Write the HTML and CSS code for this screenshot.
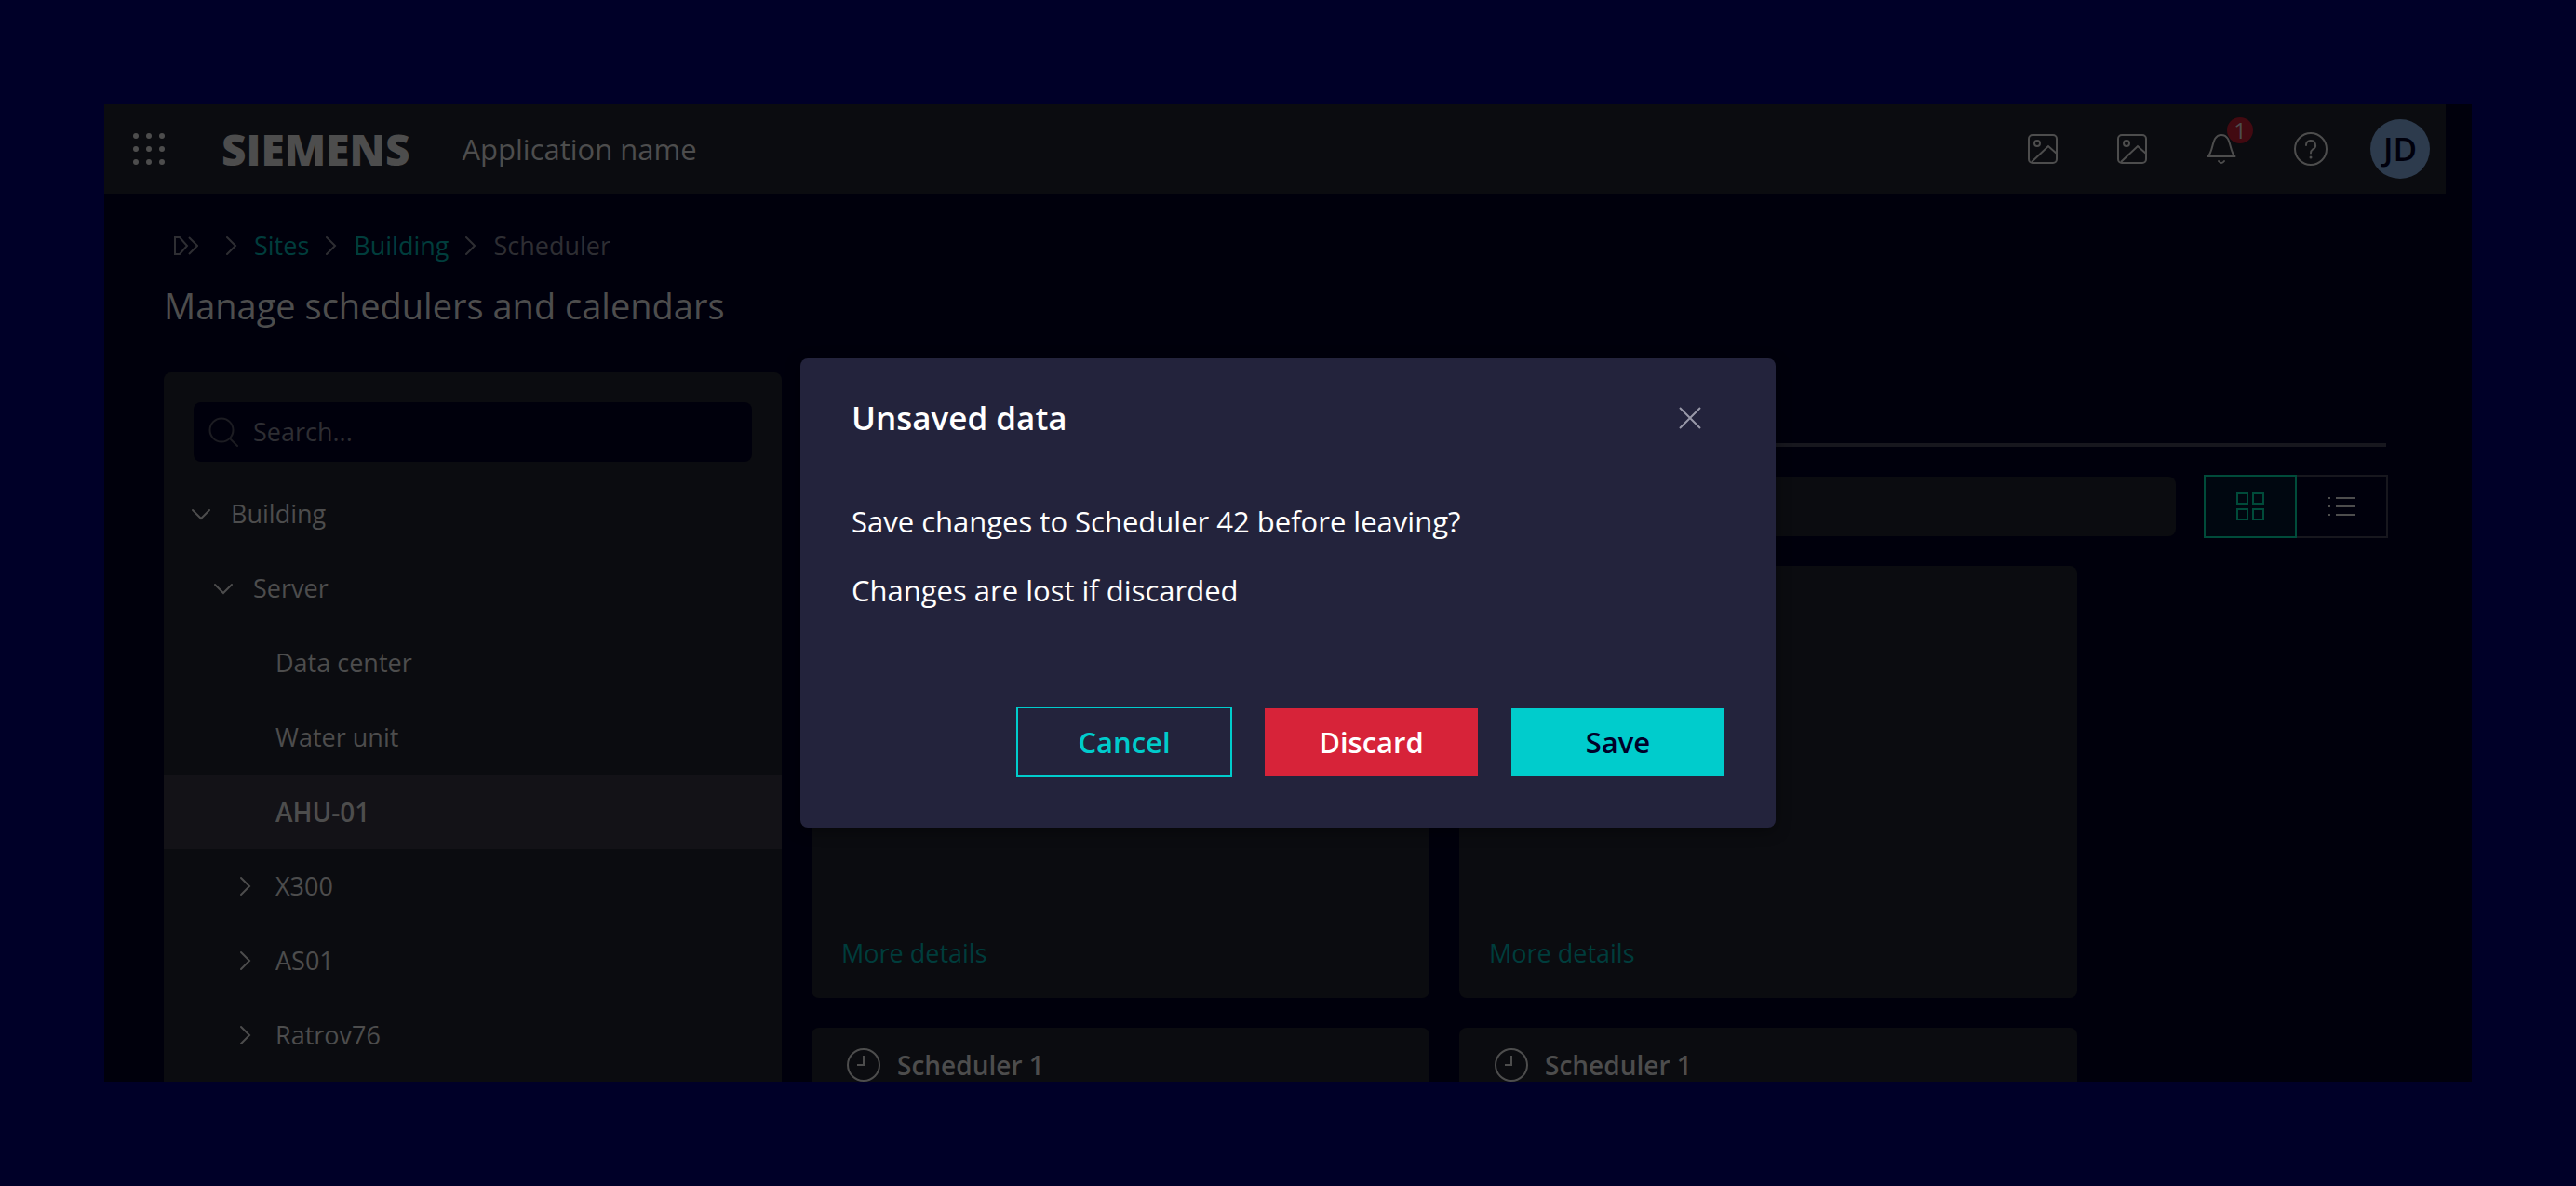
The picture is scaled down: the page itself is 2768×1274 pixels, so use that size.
FILE: index.html
```html
<!DOCTYPE html>
<html lang="en">
<head>
<meta charset="utf-8">
<title>Manage schedulers and calendars</title>
<link rel="stylesheet" href="styles.css">
</head>
<body>
<svg class="sprite" aria-hidden="true">
  <symbol id="i-waffle" viewBox="0 0 36 36"><g fill="currentColor"><circle cx="4" cy="4" r="3"/><circle cx="18" cy="4" r="3"/><circle cx="32" cy="4" r="3"/><circle cx="4" cy="18" r="3"/><circle cx="18" cy="18" r="3"/><circle cx="32" cy="18" r="3"/><circle cx="4" cy="32" r="3"/><circle cx="18" cy="32" r="3"/><circle cx="32" cy="32" r="3"/></g></symbol>
  <symbol id="i-image" viewBox="0 0 48 48"><g fill="none" stroke="currentColor" stroke-width="2"><rect x="9" y="9" width="30" height="30" rx="4"/><circle cx="18" cy="18" r="3"/><path d="M12 38 30 21 39 29"/></g></symbol>
  <symbol id="i-bell" viewBox="0 0 48 48"><g fill="none" stroke="currentColor" stroke-width="2" stroke-linecap="round" stroke-linejoin="round"><path d="M9.500 32C16 26 13 9 24 9S32 26 38.500 32Z"/><path d="M21 37Q24 41 27 37"/></g></symbol>
  <symbol id="i-help" viewBox="0 0 48 48"><g fill="none" stroke="currentColor" stroke-width="2" stroke-linecap="round"><circle cx="24" cy="24" r="17"/><path d="M19 20a5 5 0 1 1 7 4.500C24.500 25.500 24 26.500 24 28.500"/></g><circle cx="24" cy="33" r="1.500" fill="currentColor"/></symbol>
  <symbol id="i-home" viewBox="0 0 28 24"><g fill="none" stroke="currentColor" stroke-width="2"><path d="M3 3H8L16 12 8 21H3Z"/><path d="M18 3 27 12 18 21"/></g></symbol>
  <symbol id="i-right" viewBox="0 0 24 24"><path d="M7 3 16 12 7 21" fill="none" stroke="currentColor" stroke-width="2" stroke-linecap="round"/></symbol>
  <symbol id="i-down" viewBox="0 0 24 24"><path d="M3 8 12 17 21 8" fill="none" stroke="currentColor" stroke-width="2" stroke-linecap="round"/></symbol>
  <symbol id="i-search" viewBox="0 0 32 32"><g fill="none" stroke="currentColor" stroke-width="2" stroke-linecap="round"><circle cx="14" cy="14" r="12.500"/><path d="M23 23 31 31"/></g></symbol>
  <symbol id="i-grid" viewBox="0 0 32 32"><g fill="none" stroke="currentColor" stroke-width="2"><path d="M2 2H13V13H2ZM19 2H30V13H19ZM2 19H13V30H2ZM19 19H30V30H19Z"/></g></symbol>
  <symbol id="i-list" viewBox="0 0 32 32"><path d="M2 7H4M10 7H31M2 16H4M10 16H31M2 25H4M10 25H31" stroke="currentColor" stroke-width="2"/></symbol>
  <symbol id="i-clock" viewBox="0 0 36 36"><g fill="none" stroke="currentColor" stroke-width="2"><circle cx="18" cy="18" r="17"/><path d="M18 8V18H11"/></g></symbol>
  <symbol id="i-close" viewBox="0 0 24 24"><path d="M1 1 23 23M23 1 1 23" stroke="currentColor" stroke-width="2"/></symbol>
</svg>

<div class="stage">
  <div class="app">
    <header class="topbar">
      <button class="icon-btn launch" aria-label="Open launchpad"><svg class="waffle"><use href="#i-waffle"/></svg></button>
      <span class="brand">SIEMENS</span>
      <span class="app-name">Application name</span>
      <nav class="actions" aria-label="Tools">
        <button class="icon-btn" aria-label="Gallery"><svg><use href="#i-image"/></svg></button>
        <button class="icon-btn" aria-label="Pictures"><svg><use href="#i-image"/></svg></button>
        <button class="icon-btn" aria-label="Notifications"><svg><use href="#i-bell"/></svg><span class="badge">1</span></button>
        <button class="icon-btn" aria-label="Help"><svg><use href="#i-help"/></svg></button>
        <button class="avatar">JD</button>
      </nav>
    </header>

    <div class="page">
      <nav class="crumbs" aria-label="Breadcrumb">
        <a class="home" href="#" aria-label="Home"><svg><use href="#i-home"/></svg></a>
        <svg class="sep"><use href="#i-right"/></svg>
        <a href="#">Sites</a>
        <svg class="sep"><use href="#i-right"/></svg>
        <a href="#">Building</a>
        <svg class="sep"><use href="#i-right"/></svg>
        <span>Scheduler</span>
      </nav>
      <h1>Manage schedulers and calendars</h1>

      <div class="columns">
        <aside class="panel">
          <div class="search"><svg><use href="#i-search"/></svg><input type="search" placeholder="Search..." aria-label="Search the tree"></div>
          <ul class="tree">
            <li><svg><use href="#i-down"/></svg>Building</li>
            <li class="l2"><svg><use href="#i-down"/></svg>Server</li>
            <li class="l3 leaf">Data center</li>
            <li class="l3 leaf">Water unit</li>
            <li class="l3 leaf selected">AHU-01</li>
            <li class="l3"><svg><use href="#i-right"/></svg>X300</li>
            <li class="l3"><svg><use href="#i-right"/></svg>AS01</li>
            <li class="l3"><svg><use href="#i-right"/></svg>Ratrov76</li>
          </ul>
        </aside>

        <main class="content">
          <div class="tabs"></div>
          <div class="toolbar">
            <input class="filter" type="search" aria-label="Filter schedulers">
            <div class="toggle">
              <button class="active" aria-label="Grid view"><svg><use href="#i-grid"/></svg></button>
              <button aria-label="List view"><svg><use href="#i-list"/></svg></button>
            </div>
          </div>
          <div class="cards">
            <article class="card"><p class="status">Pre-comfort at 14:00</p><a href="#">More details</a></article>
            <article class="card"><p class="status">Comfort at 08:00</p><a href="#">More details</a></article>
            <article class="card"><h2><svg><use href="#i-clock"/></svg>Scheduler 1</h2></article>
            <article class="card"><h2><svg><use href="#i-clock"/></svg>Scheduler 1</h2></article>
          </div>
        </main>
      </div>
    </div>
  </div>

  <div class="overlay">
    <section class="dialog" role="dialog" aria-modal="true" aria-labelledby="dialog-title">
      <div class="dialog-head">
        <h2 id="dialog-title">Unsaved data</h2>
        <button class="close" aria-label="Close"><svg><use href="#i-close"/></svg></button>
      </div>
      <div class="dialog-body">
        <p>Save changes to Scheduler 42 before leaving?</p>
        <p>Changes are lost if discarded</p>
      </div>
      <div class="dialog-foot">
        <button class="btn cancel">Cancel</button>
        <button class="btn discard">Discard</button>
        <button class="btn save">Save</button>
      </div>
    </section>
  </div>
</div>
</body>
</html>
```
FILE: styles.css
```css
:root {
  --navy: #000028;
  --base: #00000c;
  --surface: #0b0c10;
  --text: #4d4d4d;
  --muted: #2e2e33;
  --link: #003d3c;
  --line: #17171e;
  --radius: 8px;
}
* { box-sizing: border-box; }
body {
  margin: 0;
  background: var(--navy);
  color: var(--text);
  font-family: "Open Sans", "Noto Sans", sans-serif;
  font-size: 27px;
  line-height: 40px;
}
button, input { font: inherit; color: inherit; }
button { border: 0; padding: 0; background: none; }
a { color: var(--link); text-decoration: none; }
h1, h2, p, ul { margin: 0; padding: 0; font-weight: 400; }
svg { display: block; flex: none; }
.sprite { position: absolute; width: 0; height: 0; }

.stage { position: relative; padding: 112px; height: 100vh; overflow: hidden; }
.app { height: 100%; background: var(--base); overflow: hidden; }

.topbar {
  display: flex;
  align-items: center;
  height: 96px;
  margin-right: 28px;
  padding: 0 17px 0 30px;
  background: var(--surface);
}
.launch { margin-right: 60px; }
.waffle { width: 36px; height: 36px; }
.brand { font-size: 46px; font-weight: 800; margin-right: 56px; }
.app-name { font-size: 31px; }
.actions { display: flex; align-items: center; gap: 48px; margin-left: auto; }
.icon-btn { position: relative; }
.icon-btn svg { width: 48px; height: 48px; }
.icon-btn .waffle { width: 36px; height: 36px; }
.badge {
  position: absolute;
  top: -10px;
  right: -10px;
  width: 28px;
  height: 28px;
  border-radius: 50%;
  background: #420a11;
  font-size: 24px;
  line-height: 28px;
}
.avatar {
  width: 64px;
  height: 64px;
  margin-left: -8px;
  border-radius: 50%;
  background: #2d3b4d;
  color: var(--base);
  font-size: 35px;
  font-weight: 600;
}

.page { padding: 36px 92px 0 64px; }
.crumbs { display: flex; align-items: center; color: var(--muted); gap: 12px; padding-left: 9px; }
.home { margin-right: 12px; color: var(--muted); }
.home svg { width: 28px; height: 24px; }
.sep { width: 24px; height: 24px; }
h1 { margin-top: 20px; font-size: 38px; line-height: 48px; }

.columns { display: grid; grid-template-columns: 664px 1fr; gap: 32px; margin-top: 48px; }
.panel { background: var(--surface); border-radius: var(--radius); padding-top: 32px; min-height: 800px; }
.search {
  display: flex;
  align-items: center;
  gap: 16px;
  height: 64px;
  margin: 0 32px 16px;
  padding: 0 16px;
  border-radius: var(--radius);
  background: var(--base);
  color: #1c1c22;
}
.search svg { width: 32px; height: 32px; }
.search input { flex: 1; min-width: 0; padding: 0; border: 0; background: none; }
.search input::placeholder { color: var(--muted); opacity: 1; }
.tree { list-style: none; }
.tree li { display: flex; align-items: center; gap: 20px; height: 80px; padding-left: 28px; }
.tree svg { width: 24px; height: 24px; }
.tree .l2 { padding-left: 52px; }
.tree .l3 { padding-left: 76px; }
.tree .leaf { padding-left: 120px; }
.tree .selected { background: #131217; font-size: 28px; font-weight: 600; }

.tabs { height: 80px; border-bottom: 4px solid var(--line); }
.toolbar { display: flex; align-items: center; gap: 30px; margin: 30px -2px 30px 0; }
.filter { flex: 1; min-width: 0; height: 64px; padding: 0 16px; border: 0; border-radius: var(--radius); background: var(--surface); }
.toggle { display: flex; border: 2px solid var(--line); border-left: 0; }
.toggle button { display: grid; place-items: center; width: 96px; height: 64px; }
.toggle .active { width: 100px; height: 68px; margin: -2px 0; border: 2px solid #004b3a; background: #000710; color: #004b3a; }
.toggle svg { width: 32px; height: 32px; }

.cards { display: grid; grid-template-columns: repeat(2, 664px); gap: 32px; }
.card { display: flex; flex-direction: column; height: 464px; padding: 22px 32px 28px; border-radius: var(--radius); background: var(--surface); }
.card h2 { display: flex; align-items: center; gap: 18px; padding-left: 6px; font-size: 28px; font-weight: 600; line-height: 36px; }
.card h2 svg { width: 36px; height: 36px; }
.status { margin-top: 229px; font-weight: 600; }
.card a { margin-top: auto; }

.overlay { position: absolute; inset: 0; display: grid; place-items: center; }
.dialog {
  width: 1048px;
  padding: 42px 55px 55px;
  border-radius: var(--radius);
  background: #23233c;
  color: #fff;
  font-size: 31px;
  box-shadow: 0 4px 16px rgba(0, 0, 0, .4);
}
.dialog-head { display: flex; align-items: center; justify-content: space-between; height: 44px; padding-right: 25px; }
.dialog-head h2 { font-size: 35px; font-weight: 600; }
.close { color: #9999a9; }
.close svg { width: 24px; height: 24px; }
.dialog-body { display: grid; gap: 34px; margin-top: 69px; }
.dialog-foot { display: flex; justify-content: flex-end; gap: 36px; margin-top: 106px; }
.btn { width: 229px; height: 74px; font-weight: 600; }
.cancel { width: 232px; height: 76px; margin: -1px; border: 2px solid #00cccc; color: #00cccc; }
.discard { background: #d72339; }
.save { background: #00cccc; color: #000028; }
```
